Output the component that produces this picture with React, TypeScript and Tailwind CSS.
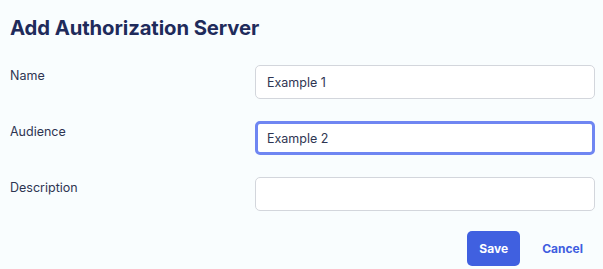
export default function App() {
  const fields = [
    { label: 'Name', value: 'Example 1', focused: false },
    { label: 'Audience', value: 'Example 2', focused: true },
    { label: 'Description', value: '', focused: false },
  ];

  return (
    <div className="w-[603px] h-[269px] bg-[#f9fdfe] font-['Inter',sans-serif] overflow-hidden">
      <div className="pl-[10px] pr-[8px] pt-[15px]">
        <h1 className="text-[20.3px] leading-[26px] font-bold text-[#1f2b5b] tracking-[-0.1px]">
          Add Authorization Server
        </h1>
        <div className="mt-[24px] flex flex-col gap-[22px]">
          {fields.map((f) => (
            <div key={f.label} className="flex items-start">
              <label className="w-[245px] pt-[3px] text-[12.5px] leading-[16px] text-[#2e3552]">
                {f.label}
              </label>
              <input
                defaultValue={f.value}
                readOnly
                className={
                  f.focused
                    ? 'w-[340px] h-[34px] rounded-[5px] border-[3px] border-[#6f86f2] bg-white px-[9px] text-[12.5px] text-[#2e3552] outline-none'
                    : 'w-[340px] h-[34px] rounded-[5px] border border-[#d3d6dc] bg-white px-[11px] text-[12.5px] text-[#2e3552] outline-none'
                }
              />
            </div>
          ))}
        </div>
        <div className="mt-[20px] flex justify-end items-center gap-[22px] pr-[12px]">
          <button className="w-[53px] h-[35px] rounded-[5px] bg-[#4060e0] text-white text-[12px] font-bold">
            Save
          </button>
          <button className="text-[12px] font-bold text-[#3f5ee0]">Cancel</button>
        </div>
      </div>
    </div>
  );
}
